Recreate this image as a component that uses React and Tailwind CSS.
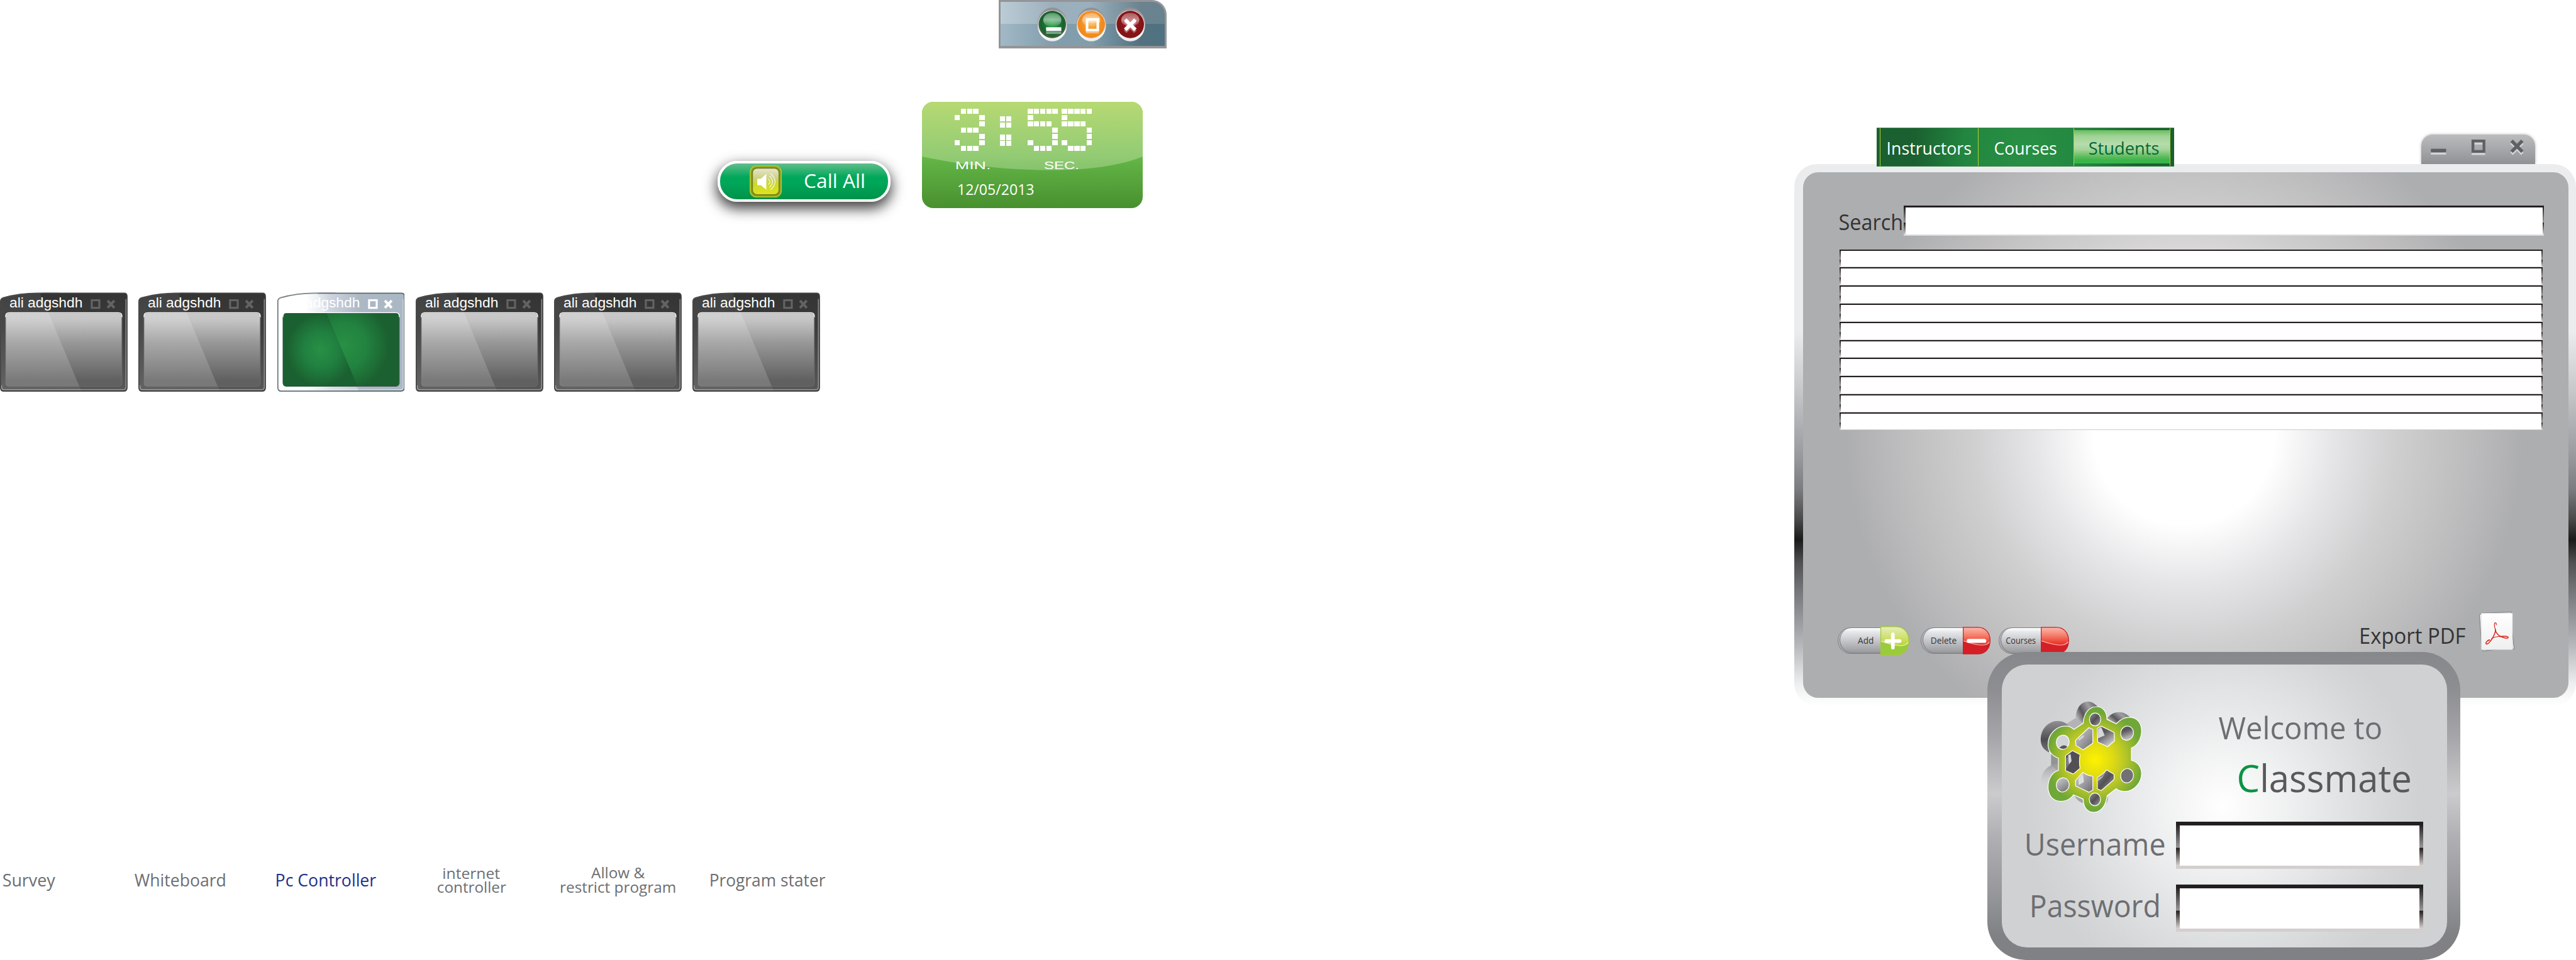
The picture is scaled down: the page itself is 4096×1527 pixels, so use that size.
import React, { useLayoutEffect, useRef } from "react";

/* One line of text whose ink spans the width of its box exactly. */
function Fit({ className = "", children }) {
  const box = useRef(null);
  const line = useRef(null);
  useLayoutEffect(() => {
    const el = line.current;
    el.style.transform = "none";
    const style = getComputedStyle(el);
    const ctx = document.createElement("canvas").getContext("2d");
    ctx.font = `${style.fontWeight} 100px ${style.fontFamily}`;
    const m = ctx.measureText(el.textContent);
    const left = -m.actualBoundingBoxLeft;
    const ink = m.actualBoundingBoxRight - left;
    const want = box.current.getBoundingClientRect().width;
    const have = el.getBoundingClientRect().width * (ink / m.width);
    const ratio = want / have;
    el.style.transform = `translateX(${(-left / m.width) * ratio * 100}%) scaleX(${ratio})`;
  }, []);
  return (
    <div ref={box} className={`shrink-0 whitespace-nowrap ${className}`}>
      <span ref={line} className="inline-block origin-left">{children}</span>
    </div>
  );
}

/* ---------- top controls ---------- */

function Orb({ id, light, dark, rim, children }) {
  return (
    <svg className="h-[62px] w-[54px] shrink-0" viewBox="0 0 54 62">
      <defs>
        <linearGradient id={`${id}r`} x1="0" y1="0" x2="0" y2="1">
          <stop offset="0" stopColor="#8f8f94" />
          <stop offset=".5" stopColor="#a9abb0" />
          <stop offset=".75" stopColor="#ffffff" />
          <stop offset="1" stopColor="#e8e9eb" />
        </linearGradient>
        <radialGradient id={`${id}b`} cx=".5" cy=".45" r=".55">
          <stop offset="0" stopColor={light} />
          <stop offset=".75" stopColor={dark} />
          <stop offset="1" stopColor={rim} />
        </radialGradient>
        <linearGradient id={`${id}g`} x1="0" y1="0" x2="0" y2="1">
          <stop offset="0" stopColor="#fff" stopOpacity=".3" />
          <stop offset=".5" stopColor="#fff" stopOpacity=".5" />
          <stop offset="1" stopColor="#fff" stopOpacity=".05" />
        </linearGradient>
      </defs>
      <ellipse cx="27" cy="31" rx="26.5" ry="30" fill={`url(#${id}r)`} />
      <circle cx="27" cy="31" r="25" fill="#fff" />
      <circle cx="27" cy="31" r="24.300" fill={`url(#${id}b)`} />
      <ellipse cx="27" cy="23" rx="16" ry="12.5" fill={`url(#${id}g)`} />
      {children}
    </svg>
  );
}

function TopBar() {
  return (
    <div className="ml-[136px] flex h-[86px] w-[297px] rounded-tr-[26px] border-4 border-b-5 border-[#939598] bg-[linear-gradient(180deg,rgba(255,255,255,0.1)_0,rgba(255,255,255,0.1)_50%,rgba(30,90,120,0.12)_50%,rgba(30,90,120,0.12)_100%),linear-gradient(90deg,#b4c6d1_0%,#90a6b3_32%,#8ea7b4_55%,#5a7582_85%,#577482_100%)]">
      <div className="flex gap-[15px] pt-[9px] pl-[65px]">
        <Orb id="o1" light="#25a244" dark="#17622f" rim="#4f5f42">
          <path d="M16 43h27v5H16z" fill="#fff" opacity=".4" />
          <path d="M16 36h27v6.5H16z" fill="#fff" />
        </Orb>
        <Orb id="o2" light="#fbb040" dark="#f18b1e" rim="#f18b1e">
          <rect x="19.5" y="26" width="19" height="19" fill="none" stroke="#fff" strokeWidth="4" opacity=".4" />
          <rect x="19.5" y="22" width="19" height="19" fill="none" stroke="#fff" strokeWidth="4.5" />
        </Orb>
        <Orb id="o3" light="#a5161b" dark="#841416" rim="#841416">
          <path d="M18 26l18 18M36 26l-18 18" stroke="#fff" strokeWidth="6.5" opacity=".35" />
          <path d="M18 22.500l18 18M36 22.500l-18 18" stroke="#fff" strokeWidth="6.500" />
        </Orb>
      </div>
    </div>
  );
}

const THREE = ["01110", "10001", "00001", "01110", "00001", "10001", "01110"];
const FIVE = ["11111", "10000", "11110", "00001", "00001", "10001", "01110"];
const COLON = ["11", "11", "00", "11", "11"];

function Dots({ rows }) {
  return (
    <div className="flex flex-col gap-[2px]">
      {rows.map((r, i) => (
        <div key={i} className="flex gap-[1.5px]">
          {r.split("").map((c, j) => (
            <div key={j} className={c === "1" ? "h-[9px] w-[9.5px] bg-white" : "h-[9px] w-[9.5px]"} />
          ))}
        </div>
      ))}
    </div>
  );
}

function Clock() {
  return (
    <div className="relative mt-[94px] h-[189px] w-[391px] overflow-hidden rounded-[20px] bg-[linear-gradient(180deg,#8dc63f_0%,#6cbe45_48%,#62b446_55%,#48902f_100%)] text-white">
      <svg className="absolute inset-0 h-full w-full" viewBox="0 0 391 189">
        <defs>
          <linearGradient id="gloss" x1="0" y1="0" x2="0" y2="1">
            <stop offset="0" stopColor="#b7d973" />
            <stop offset=".8" stopColor="#92cb74" />
            <stop offset="1" stopColor="#86c36c" />
          </linearGradient>
        </defs>
        <path d="M0 0H391V97C345 115 290 121 228 121C150 121 65 111 0 97Z" fill="url(#gloss)" />
      </svg>
      <div className="relative flex flex-col">
        <div className="flex h-[89px] items-start pt-[13px] pl-[58px]">
          <Dots rows={THREE} />
          <div className="pt-[13px] pl-[26.500px]"><Dots rows={COLON} /></div>
          <div className="pl-[29px]"><Dots rows={FIVE} /></div>
          <div className="pl-[7px]"><Dots rows={FIVE} /></div>
        </div>
        <div className="flex pt-[15px] pl-[62px] font-['Liberation_Sans'] text-[18px]">
          <Fit className="w-[58px]">MIN.</Fit>
          <Fit className="ml-[97px] w-[59px]">SEC.</Fit>
        </div>
        <Fit className="mt-[22px] ml-[65px] w-[133px] text-[25.5px]">12/05/2013</Fit>
      </div>
    </div>
  );
}

function CallAll() {
  return (
    <div className="mt-[285px] ml-[1271px] flex h-[73px] w-[306px] shrink-0 items-center rounded-[35px] border-[4.5px] border-white bg-[linear-gradient(180deg,#62bd8b_0%,#00a85a_38%,#00a659_55%,#00924a_100%)] shadow-[0_10px_24px_2px_rgba(0,0,0,0.75)]">
      <svg className="ml-[52px] h-[57px] w-[57px] shrink-0" viewBox="0 0 57 57">
        <defs>
          <linearGradient id="spk" x1="0" y1="0" x2="0" y2="1">
            <stop offset="0" stopColor="#e6e6d6" />
            <stop offset=".4" stopColor="#ccd07a" />
            <stop offset=".6" stopColor="#cdd82a" />
            <stop offset="1" stopColor="#dde41f" />
          </linearGradient>
        </defs>
        <rect x="1" y="1" width="55" height="55" rx="11" fill="#8a9a1f" stroke="#b0c82f" strokeWidth="2" />
        <rect x="5" y="5" width="47" height="47" rx="8" fill="url(#spk)" stroke="#6f7a18" strokeWidth="1.5" />
        <path d="M13.500 24h6l10-9v28l-10-8h-6z" fill="#fff" />
        <g fill="none" stroke="#fff" strokeWidth="1.5" opacity=".8">
          <path d="M33 24q6 5 0 10M35 19q11 10 0 20M37 14.500q16 14.500 0 29" />
        </g>
      </svg>
      <Fit className="mb-[4px] ml-[41px] w-[104px] text-[35.5px] text-white">Call All</Fit>
    </div>
  );
}

/* ---------- thumbnails ---------- */

const FRAME = "M1 16Q1 11 6 9.500Q35 1.500 66 1.500H220Q225 1.500 225 7V169Q225 175 219 175H7Q1 175 1 169Z";
const SHEEN = "M1 16Q1 11 6 9.500Q35 1.500 66 1.500H71L86 36L144 174H7Q1 174 1 169Z";

function Thumb({ active }) {
  return (
    <div className="relative h-[177px] w-[226px] shrink-0">
      <svg className="absolute inset-0 h-full w-full" viewBox="0 0 226 177">
        <defs>
          <linearGradient id="fr" x1="0" y1="0" x2="0" y2="1">
            <stop offset="0" stopColor="#333433" />
            <stop offset=".35" stopColor="#3b3b3b" />
            <stop offset="1" stopColor="#585858" />
          </linearGradient>
          <linearGradient id="fa" x1="0" y1="0" x2="1" y2="0">
            <stop offset="0" stopColor="#fff" />
            <stop offset=".22" stopColor="#fff" />
            <stop offset=".42" stopColor="#ccd3de" />
            <stop offset=".65" stopColor="#adb8c5" />
            <stop offset="1" stopColor="#abb7c4" />
          </linearGradient>
          <linearGradient id="sc" x1="0" y1="0" x2="0" y2="1">
            <stop offset="0" stopColor="#cacaca" />
            <stop offset=".1" stopColor="#c4c4c4" />
            <stop offset=".4" stopColor="#999899" />
            <stop offset=".7" stopColor="#787878" />
            <stop offset=".92" stopColor="#606060" />
            <stop offset="1" stopColor="#606060" />
          </linearGradient>
          <radialGradient id="ga" gradientUnits="userSpaceOnUse" cx="77" cy="102" r="64" gradientTransform="translate(77 0) scale(.95 1) translate(-77 0)">
            <stop offset="0" stopColor="#289044" />
            <stop offset=".5" stopColor="#208040" />
            <stop offset="1" stopColor="#1b6030" />
          </radialGradient>
          <radialGradient id="gb" gradientUnits="userSpaceOnUse" cx="118" cy="94" r="80">
            <stop offset="0" stopColor="#289044" />
            <stop offset=".5" stopColor="#228240" />
            <stop offset="1" stopColor="#1b6030" />
          </radialGradient>
        </defs>
        <path d="M75 .5H103" stroke="#c9c9c9" />
        <path d={FRAME} fill={active ? "url(#fa)" : "url(#fr)"} stroke={active ? "#5c6b6b" : "#414141"} strokeWidth="2" />
        <path d="M3 165V168Q3 172.500 8 172.500H218Q223 172.500 223 168V12" fill="none" stroke={active ? "#e3e8ee" : "#aeaeae"} strokeWidth="1.200" />
        <path d={SHEEN} fill="#fff" opacity={active ? ".3" : ".07"} />
        <rect x="10" y="36.500" width="206" height="130" rx="6" fill={active ? "url(#gb)" : "url(#sc)"} stroke={active ? "#3c5a48" : "#6b6b6b"} strokeWidth="1.200" />
        {active ? (
          <path d="M10 42Q10 36.500 16 36.500H87L142 166.500H16Q10 166.500 10 161Z" fill="url(#ga)" />
        ) : (
          <path d="M10 42Q10 36.500 16 36.500H86L140.500 166.500H16Q10 166.500 10 161Z" fill="#fff" opacity=".16" />
        )}
        <path d="M10 44V42Q10 36 16 36H210Q216 36 216 42V44" fill="none" stroke="#fff" strokeWidth="1.500" />
        <g fill="none" stroke={active ? "#fff" : "#626464"}>
          <rect x="162.500" y="14" width="13.500" height="13.500" strokeWidth="3.500" />
          <path d="M190.500 14.500L202.500 27.500M202.500 14.500L190.500 27.500" strokeWidth="4.500" />
        </g>
      </svg>
      <Fit className="relative ml-[18px] w-[127px] pt-[6.500px] font-['Liberation_Sans'] text-[24.5px] text-white">ali adgshdh</Fit>
    </div>
  );
}

/* ---------- fields and buttons ---------- */

const SIDES = "bg-[linear-gradient(180deg,#2a2526_0%,#999797_55%,#231f20_56%,#d8d2d0_100%)]";

function Field({ className }) {
  return (
    <div className={`shrink-0 ${SIDES} ${className}`}>
      <div className="h-full w-full bg-white" />
    </div>
  );
}

function Pill({ id, label, labelClass, className, capClass, green, sign }) {
  return (
    <div className={`flex h-[52px] shrink-0 items-center ${className}`}>
      <div className="flex h-[47px] flex-1 items-center rounded-l-full border-2 border-r-0 border-[#808184] bg-[linear-gradient(180deg,#ffffff_0%,#e6e9ec_15%,#c6c7ca_50%,#96979a_100%)] shadow-[inset_2px_0_0_#b8b9bb,inset_3.500px_-1px_0_#88898c]">
        <Fit className={`text-[16px] font-medium text-[#373435] ${labelClass}`}>{label}</Fit>
      </div>
      <svg className={`shrink-0 ${capClass}`} viewBox="0 0 51 52" preserveAspectRatio="none">
        <defs>
          <linearGradient id={id} x1="0" y1="0" x2="0" y2="1">
            <stop offset="0" stopColor={green ? "#e6efb8" : "#fbb9ae"} />
            <stop offset=".5" stopColor={green ? "#d3e27a" : "#f47a66"} />
            <stop offset="1" stopColor={green ? "#b9d532" : "#ea2a20"} />
          </linearGradient>
        </defs>
        <path d="M.7 1H28C42 1 50.300 12 50.300 26S42 51 28 51H.7Z" fill={green ? "#9acb3b" : "#d41f26"} />
        <path d="M.7 1H28C42 1 50.300 12 50.300 26Q50 31 49 32Q28 37 .7 27Z" fill={`url(#${id})`} />
        <path d="M1 26.500Q22 34 36 34.500Q46 34 49.500 28" fill="none" stroke="#fff" strokeWidth="1.600" opacity=".6" />
        <path d="M.7 1H28C42 1 50.300 12 50.300 26S42 51 28 51H.7Z" fill="none" stroke={green ? "#a6c936" : "#c4242a"} strokeWidth="1.400" />
        {sign === "+" && <path d="M22 14.500V38M10.500 26.300H34" stroke="#fff" strokeWidth="6.500" strokeLinecap="round" />}
        {sign === "-" && <path d="M11 26.500H39.500" stroke="#fff" strokeWidth="7.500" strokeLinecap="round" />}
      </svg>
    </div>
  );
}

function PdfIcon() {
  return (
    <svg className="mt-[-26px] ml-[24px] h-[71px] w-[63px] shrink-0" viewBox="0 0 63 71">
      <defs>
        <linearGradient id="sheet" x1="0" y1="0" x2="0" y2="1">
          <stop offset="0" stopColor="#ffffff" />
          <stop offset="1" stopColor="#efeff0" />
        </linearGradient>
      </defs>
      <path d="M.7 5L5 3.500V67L4.500 67ZM3.500 2.500L57 .7V4H4ZM58 30L62 66L56 66.500ZM6 66H40L6.500 69.500Z" fill="#f7f7f7" stroke="#6d6e71" strokeWidth="1" />
      <path d="M3.500 2.500H59.200V67.500H3.500Z" fill="url(#sheet)" stroke="#c4c5c7" strokeWidth=".7" />
      <g fill="none" stroke="#d8261c" strokeLinecap="round" strokeLinejoin="round">
        <path d="M30.500 23C30.500 18.500 27 18.500 27 23C27 28 29 31 29.300 35" strokeWidth="1.300" />
        <path d="M29.300 32C28 40 24 47 20 52C17 56.500 13 58.500 12 56.500C11.500 54.500 15 50.500 18.500 50" strokeWidth="1.700" />
        <path d="M29 34C31 39 35 43 40 44.500C46 47 51 48 51.500 45.500C51 43 42 43 36 44" strokeWidth="1.700" />
        <path d="M22 47.500C27 45 32 44 37 43.500" strokeWidth="1.200" />
      </g>
    </svg>
  );
}

const BODY =
  "M299 185C303 120 340 97 370 97C402 97 425 122 425 165L474 188C500 160 525 153 545 153C590 153 609 190 609 225C609 270 585 305 555 317V382C590 390 609 420 609 452C609 500 570 548 520 548C500 548 485 542 474 533L426 570C420 620 395 659 355 659C320 659 299 630 299 588L247 566C230 590 210 600 180 600C135 600 112 565 112 525C112 480 135 445 167 436V371C130 358 112 330 112 297C112 245 155 200 205 200C225 200 240 208 249 218Z";

function Logo() {
  return (
    <svg className="h-[240px] w-[240px] shrink-0" viewBox="0 0 720 720">
      <defs>
        <radialGradient id="lg" gradientUnits="userSpaceOnUse" cx="362" cy="380" r="285">
          <stop offset="0" stopColor="#fff200" />
          <stop offset=".35" stopColor="#dcd915" />
          <stop offset=".55" stopColor="#bac826" />
          <stop offset=".9" stopColor="#6fa738" />
          <stop offset="1" stopColor="#6fa738" />
        </radialGradient>
        <linearGradient id="m1" x1="0" y1=".8" x2="1" y2=".2">
          <stop offset="0" stopColor="#d9d9da" />
          <stop offset=".38" stopColor="#59565b" />
          <stop offset=".7" stopColor="#a0a0a2" />
          <stop offset="1" stopColor="#666468" />
        </linearGradient>
        <linearGradient id="m2" x1="0" y1="0" x2="0" y2="1">
          <stop offset="0" stopColor="#8f8f92" />
          <stop offset=".6" stopColor="#504d52" />
          <stop offset="1" stopColor="#77757a" />
        </linearGradient>
        <linearGradient id="m3" x1="0" y1="0" x2="0" y2="1">
          <stop offset="0" stopColor="#9a9a9d" />
          <stop offset="1" stopColor="#d4d5d7" stopOpacity="0" />
        </linearGradient>
        <linearGradient id="h1" x1="0" y1="0" x2="1" y2="1">
          <stop offset="0" stopColor="#cfcfd1" />
          <stop offset=".5" stopColor="#a09fa2" />
          <stop offset="1" stopColor="#6c6a6e" />
        </linearGradient>
        <linearGradient id="h2" x1=".2" y1="0" x2=".8" y2="1">
          <stop offset="0" stopColor="#5a575c" />
          <stop offset=".3" stopColor="#59565b" />
          <stop offset="1" stopColor="#dcdcde" />
        </linearGradient>
        <linearGradient id="h3" x1="0" y1="0" x2="1" y2="1">
          <stop offset="0" stopColor="#8f8e91" />
          <stop offset=".5" stopColor="#535055" />
          <stop offset="1" stopColor="#a3a2a5" />
        </linearGradient>
      </defs>
      <path d="M258 158C262 100 290 70 325 70C345 70 360 82 375 95L340 180L290 200Z" fill="url(#m1)" />
      <path d="M425 160C445 135 465 126 490 126C515 126 535 140 550 155L480 190Z" fill="url(#m1)" />
      <path d="M210 188L258 158L302 185L250 220L200 205Z" fill="#b3b3b5" />
      <path d="M116 340C85 325 73 300 73 270C73 215 115 173 165 173C185 173 202 180 214 192L240 220Z" fill="url(#m2)" />
      <path d="M128 345L170 365V440L128 410Z" fill="#939295" />
      <path d="M165 400C120 400 74 440 74 495L85 530L120 530L170 440Z" fill="url(#m3)" />
      <path d="M250 566L295 590L300 610Q265 600 250 566ZM428 572Q436 590 420 615Z" fill="#a5a5a8" />
      <path d={BODY} fill="url(#lg)" stroke="#fff" strokeWidth="4" />
      <g stroke="#fff" strokeWidth="4" strokeLinejoin="round">
        <ellipse cx="362" cy="165" rx="30" ry="34" fill="url(#h3)" />
        <ellipse cx="532" cy="238" rx="34" ry="38" transform="rotate(15 532 238)" fill="url(#h2)" />
        <ellipse cx="190" cy="286" rx="34" ry="38" transform="rotate(15 190 286)" fill="#d3d4d6" />
        <ellipse cx="190" cy="513" rx="34" ry="38" transform="rotate(15 190 513)" fill="url(#h1)" />
        <ellipse cx="532" cy="464" rx="34" ry="38" transform="rotate(15 532 464)" fill="#727075" />
        <ellipse cx="361" cy="590" rx="30" ry="34" fill="url(#h3)" />
        <path d="M258 276L329 209L350 218V291L299 327L260 303Z" fill="url(#h1)" />
        <path d="M374 212L395 201L463 234L465 279L429 310L376 285Z" fill="url(#h2)" />
        <path d="M205 358L242 331L282 352Q276 388 282 425L246 455L205 437Z" fill="#535055" />
        <path d="M258 490L297 446Q320 463 350 467V540L329 552L258 518Z" fill="url(#h1)" />
        <path d="M374 473Q400 462 423 433L463 457V484L395 543L374 534Z" fill="url(#h3)" />
      </g>
      <path d="M172 316Q195 293 212 308L214 311Q205 322 190 322Z" fill="#59565b" />
      <path d="M273 268L302 247V258L277 277ZM219 354L232 350L237 387L222 405ZM378 215L395 206L413 250L378 266Z" fill="#d6d7d9" />
      <path d="M274 480L297 452L303 498L274 514Z" fill="#dcdde0" />
      <path d="M208 375L219 354L222 405L208 430Z" fill="#7d7b80" />
      <path d="M376 476L398 468L420 440L400 475L377 495Z" fill="#b5b5b8" />
    </svg>
  );
}

/* ---------- directory window ---------- */

function Tabs() {
  return (
    <div className="relative z-10 mt-[226px] ml-[146px] flex h-[69px] w-[527px] shrink-0 border-y border-[#3f8550] bg-[radial-gradient(circle_at_265px_34px,#289044_0,#228640_110px,#1b6030_200px,#1b6030_100%)] pl-[6px]">
      <div className="flex w-[174px] border-l-2 border-[#b5d333] pt-[20px] pl-[13px]">
        <Fit className="w-[147px] text-[31px] text-white">Instructors</Fit>
      </div>
      <div className="flex w-[169px] border-l-2 border-[#b5d333] pt-[20px] pl-[29px]">
        <Fit className="w-[109px] text-[31px] text-white">Courses</Fit>
      </div>
      <div className="flex w-[171px] border-x-2 border-[#b5d333] py-[4px]">
        <div className="flex w-full bg-[linear-gradient(180deg,#6abd5f_0%,#9fd395_18%,#b6dcab_42%,#a6d59b_58%,#5dbb5c_80%,#3ab54a_90%,#3ab54a_100%)] pt-[16px] pl-[27px]">
          <Fit className="w-[123px] text-[31px] text-[#006838]">Students</Fit>
        </div>
      </div>
    </div>
  );
}

function WindowControls() {
  return (
    <div className="mt-[238px] ml-[438px] h-[53px] w-[202px] shrink-0 rounded-t-[20px] bg-[linear-gradient(180deg,#bbbcbe_0%,#a8a9ac_45%,#909195_100%)] shadow-[0_0_5px_rgba(0,0,0,0.3)]">
      <svg className="h-[53px] w-[202px]" viewBox="0 0 202 53">
        <g fill="none" stroke="#d4d5d7">
          <path d="M17 32.500H44" strokeWidth="6" />
          <rect x="91.500" y="15.500" width="19.500" height="18.500" strokeWidth="4.500" />
          <path d="M160 14.500L179 34M179 14.500L160 34" strokeWidth="6" />
        </g>
        <g fill="none" stroke="#5f6062">
          <path d="M17 28.500H44" strokeWidth="6.500" />
          <rect x="91.500" y="11.500" width="19.500" height="18.500" strokeWidth="5" />
          <path d="M160 11L179 30.500M179 11L160 30.500" strokeWidth="6" />
        </g>
      </svg>
    </div>
  );
}

function Directory() {
  return (
    <div className="h-[960px] w-[1385px] shrink-0 rounded-[40px] bg-[linear-gradient(180deg,#ebecee_0%,#ebecee_31%,#c6c7c9_42%,#98999d_54%,#7b7c7f_60%,#4a4a4b_65.5%,#1a1a1a_69.3%,#505051_73.5%,#707174_78%,#97989c_84%,#b8b9bc_89%,#eeefef_96%,#ffffff_100%)] pt-[14px] pl-[15.5px]">
      <div className="flex h-[932px] w-[1356px] flex-col rounded-[27px] bg-[radial-gradient(circle_at_675px_465px,#ffffff_0,#ffffff_160px,#e6e6e8_262px,#cfcfd0_375px,#bdbdbe_500px,#adaeb0_600px)] pl-[64.500px]">
        <div className="mt-[59px] flex h-[54px] shrink-0">
          <Fit className="mt-[10px] w-[110px] text-[38.5px] text-[#333333]">Search</Fit>
          <Field className="ml-[4.500px] h-[54px] w-[1133.500px] border-t-4 border-b-3 border-t-[#231f20] border-b-[#dcdcdd] px-[2.500px]" />
        </div>
        <div className="mt-[24px] flex h-[320.500px] w-[1246px] shrink-0 flex-col">
          {Array.from({ length: 10 }, (_, i) => (
            <Field key={i} className="h-[32.050px] border-t-3 border-b-2 border-t-[#231f20] border-b-[#cfcccc] px-[2.500px]" />
          ))}
        </div>
        <div className="mt-[347px] ml-[-3px] flex h-[52px] shrink-0">
          <Pill id="p1" label="Add" className="w-[127px]" labelClass="ml-[35px] w-[27px]" capClass="h-[52px] w-[51px]" green sign="+" />
          <Pill id="p2" label="Delete" className="ml-[20px] w-[124px]" labelClass="ml-[18px] w-[44px]" capClass="h-[49px] w-[49px]" sign="-" />
          <Pill id="p3" label="Courses" className="ml-[14px] w-[125px]" labelClass="ml-[13px] w-[52px]" capClass="h-[49px] w-[50px]" />
          <Fit className="mt-[-2px] ml-[517px] w-[185px] text-[38.500px] text-[#333333]">Export PDF</Fit>
          <PdfIcon />
        </div>
      </div>
    </div>
  );
}

function Login() {
  return (
    <div className="relative mt-[-96px] ml-[342.500px] h-[546px] w-[837.500px] shrink-0 rounded-[68px] bg-[linear-gradient(180deg,#87888b_0%,#8d8e91_12%,#a5a5a9_27%,#cbcbcd_46%,#b0b0b4_60%,#97989b_78%,#808184_92%,#808184_100%)] pt-[22.500px] pl-[25.500px]">
      <div className="flex h-[501px] w-[788.500px] flex-col rounded-[45px] bg-[radial-gradient(circle_at_392px_251px,#ffffff_0,#f1f2f2_100px,#e1e2e4_215px,#d5d6d8_300px,#d0d1d3_350px)]">
        <div className="flex h-[279px] shrink-0">
          <div className="mt-[42.500px] ml-[44px] w-[240px]"><Logo /></div>
          <div className="ml-[100px] flex flex-col">
            <Fit className="mt-[84px] w-[287px] text-[55px] text-[#6d6e71]">Welcome to</Fit>
            <Fit className="mt-[27px] ml-[36px] w-[303px] text-[68px] text-[#58595b]">
              <span className="text-[#0a9444]">C</span>lassmate
            </Fit>
          </div>
        </div>
        <div className="flex h-[110.500px] shrink-0">
          <Fit className="mt-[11px] ml-[44px] w-[243px] text-[55px] text-[#6d6e71]">Username</Fit>
          <Field className="ml-[22px] h-[83.500px] w-[437px] border-t-7 border-b-6 border-t-[#231f20] border-b-[#d3cfce] px-[6.500px]" />
        </div>
        <div className="flex shrink-0">
          <Fit className="mt-[9px] ml-[53px] w-[224px] text-[55px] text-[#6d6e71]">Password</Fit>
          <Field className="ml-[32px] h-[83.500px] w-[437px] border-t-7 border-b-6 border-t-[#231f20] border-b-[#d3cfce] px-[6.500px]" />
        </div>
      </div>
    </div>
  );
}

function Menu() {
  return (
    <nav className="mt-[838px] flex h-[80px] shrink-0 text-[31px] text-[#6d6e71]">
      <Fit className="mt-[11px] ml-[5.500px] w-[92.500px]">Survey</Fit>
      <Fit className="mt-[11px] ml-[140px] w-[160px]">Whiteboard</Fit>
      <Fit className="mt-[11px] ml-[92px] w-[176px] text-[#21308a]">Pc Controller</Fit>
      <div className="ml-[109px] flex flex-col items-center text-[26.500px] leading-[24.500px]">
        <Fit className="mt-[2px] w-[100px]">internet</Fit>
        <Fit className="w-[121px]">controller</Fit>
      </div>
      <div className="ml-[98px] flex flex-col items-center text-[26.500px] leading-[24.500px]">
        <Fit className="mt-[1px] w-[95px]">Allow &amp;</Fit>
        <Fit className="mt-[1px] w-[202px]">restrict program</Fit>
      </div>
      <Fit className="mt-[11px] ml-[63px] w-[203px]">Program stater</Fit>
    </nav>
  );
}

export default function App() {
  return (
    <main className="flex h-[1701px] w-[4563px] overflow-hidden bg-white font-['Open_Sans',sans-serif] leading-none [zoom:0.89765]">
      <section className="flex w-[3178px] shrink-0 flex-col">
        <header className="flex h-[518px] shrink-0 items-start">
          <CallAll />
          <div className="ml-[56px] flex flex-col">
            <TopBar />
            <Clock />
          </div>
        </header>
        <div className="flex shrink-0 gap-[19.400px]">
          {[0, 1, 2, 3, 4, 5].map((i) => (
            <Thumb key={i} active={i === 2} />
          ))}
        </div>
        <Menu />
      </section>
      <section className="flex w-[1385px] shrink-0 flex-col">
        <div className="flex h-[291px] shrink-0 items-start">
          <Tabs />
          <WindowControls />
        </div>
        <Directory />
        <Login />
      </section>
    </main>
  );
}
